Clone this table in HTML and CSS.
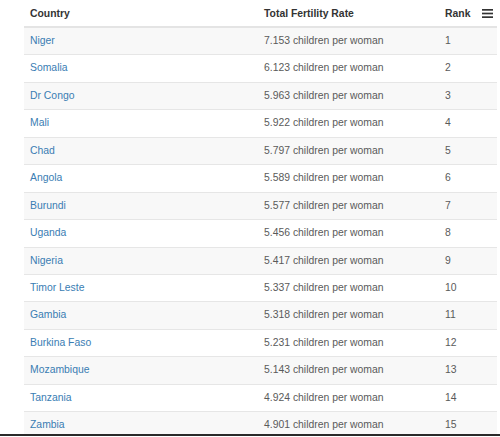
FILE: index.html
```html
<!DOCTYPE html>
<html>
<head>
<meta charset="utf-8">
<link rel="stylesheet" href="styles.css">
</head>
<body>
<div class="viewport">
  <table class="ranking">
    <colgroup>
      <col class="c1"><col class="c2"><col class="c3">
    </colgroup>
    <thead>
      <tr>
        <th>Country</th>
        <th>Total Fertility Rate</th>
        <th>
          <div class="rank-head"><span>Rank</span>
            <svg class="menu" width="11" height="9" viewBox="0 0 11 9"><rect x="0" y="0" width="11" height="1.7" fill="#333"/><rect x="0" y="3.65" width="11" height="1.7" fill="#333"/><rect x="0" y="7.3" width="11" height="1.7" fill="#333"/></svg>
          </div>
        </th>
      </tr>
    </thead>
    <tbody>
      <tr><td><a href="#">Niger</a></td><td>7.153 children per woman</td><td>1</td></tr>
      <tr><td><a href="#">Somalia</a></td><td>6.123 children per woman</td><td>2</td></tr>
      <tr><td><a href="#">Dr Congo</a></td><td>5.963 children per woman</td><td>3</td></tr>
      <tr><td><a href="#">Mali</a></td><td>5.922 children per woman</td><td>4</td></tr>
      <tr><td><a href="#">Chad</a></td><td>5.797 children per woman</td><td>5</td></tr>
      <tr><td><a href="#">Angola</a></td><td>5.589 children per woman</td><td>6</td></tr>
      <tr><td><a href="#">Burundi</a></td><td>5.577 children per woman</td><td>7</td></tr>
      <tr><td><a href="#">Uganda</a></td><td>5.456 children per woman</td><td>8</td></tr>
      <tr><td><a href="#">Nigeria</a></td><td>5.417 children per woman</td><td>9</td></tr>
      <tr><td><a href="#">Timor Leste</a></td><td>5.337 children per woman</td><td>10</td></tr>
      <tr><td><a href="#">Gambia</a></td><td>5.318 children per woman</td><td>11</td></tr>
      <tr><td><a href="#">Burkina Faso</a></td><td>5.231 children per woman</td><td>12</td></tr>
      <tr><td><a href="#">Mozambique</a></td><td>5.143 children per woman</td><td>13</td></tr>
      <tr><td><a href="#">Tanzania</a></td><td>4.924 children per woman</td><td>14</td></tr>
      <tr><td><a href="#">Zambia</a></td><td>4.901 children per woman</td><td>15</td></tr>
    </tbody>
  </table>
</div>
<div class="edge"></div>
</body>
</html>
```
FILE: styles.css
```css
html, body {
  margin: 0;
  padding: 0;
  background: #fff;
}
body {
  font-family: "Liberation Sans", Arial, sans-serif;
  font-size: 10.4px;
  color: #5a5a5a;
}
.viewport {
  height: 434px;
  overflow: hidden;
  padding-left: 24px;
  padding-right: 3px;
}
.ranking {
  width: 100%;
  border-collapse: collapse;
  table-layout: fixed;
}
.c1 { width: 234px; }
.c2 { width: 181px; }
.c3 { width: auto; }
.ranking th {
  text-align: left;
  font-weight: bold;
  color: #333;
  height: 27px;
  padding: 0 6px;
  box-sizing: border-box;
  border-bottom: 2px solid #e4e4e4;
  vertical-align: middle;
}
.rank-head {
  display: flex;
  align-items: center;
  justify-content: space-between;
  margin-right: -2px;
}
.menu { display: block; }
.ranking td {
  padding: 6px;
  line-height: 14.43px;
  border-top: 1px solid #e6e6e6;
  vertical-align: middle;
}
.ranking tbody tr:nth-child(odd) td {
  background: #f8f8f8;
}
.ranking a {
  color: #3a7db3;
  text-decoration: none;
}
.edge {
  height: 2px;
  background: #2a2a2a;
}
```
